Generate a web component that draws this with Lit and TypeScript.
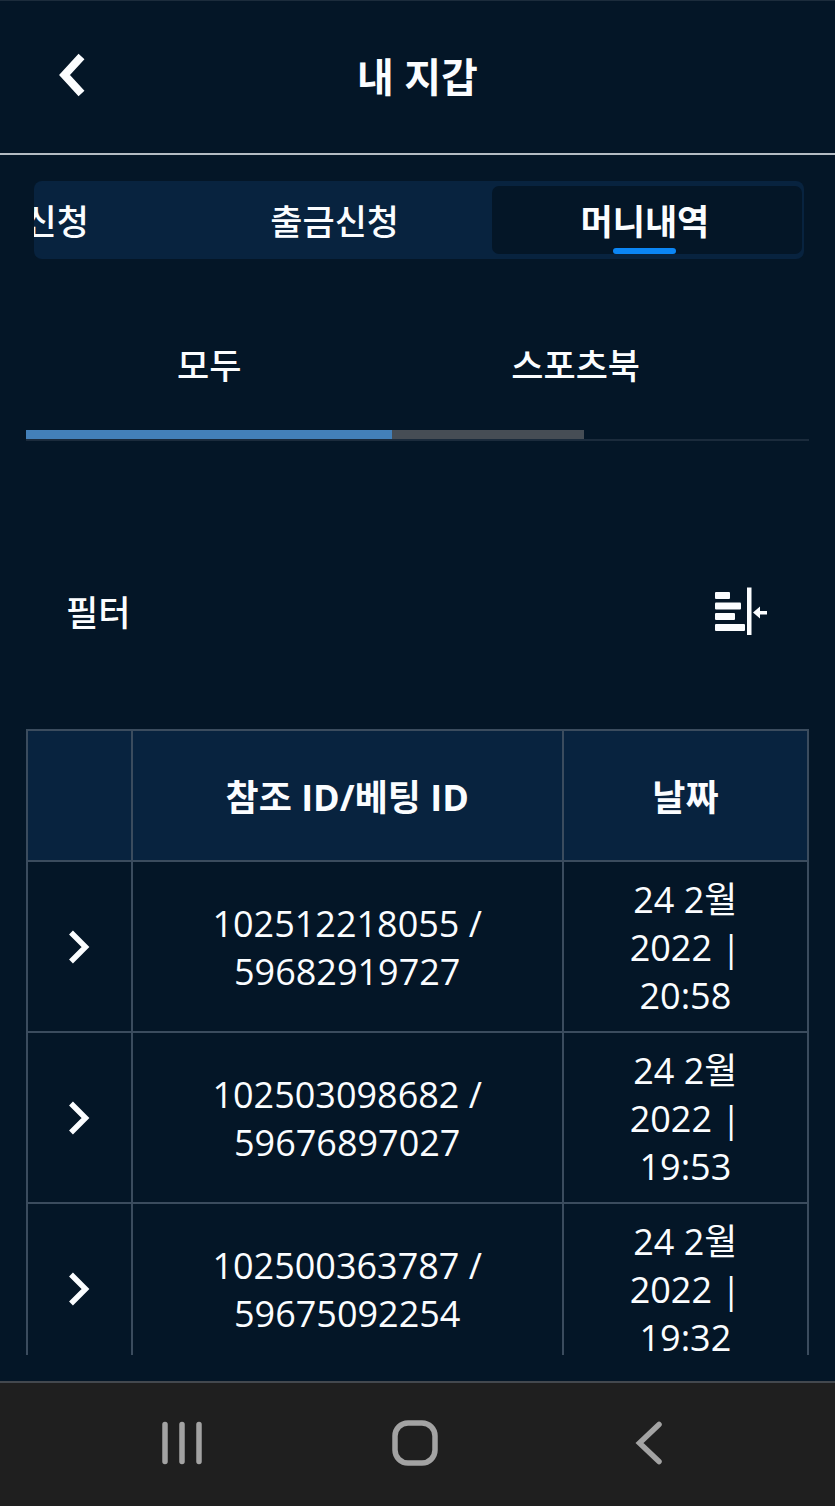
import { LitElement, html, css } from "lit";
import { customElement, state } from "lit/decorators.js";

interface Entry {
  reference: string;
  bet: string;
  day: string;
  year: string;
  time: string;
}

const ENTRIES: Entry[] = [
  { reference: "102512218055", bet: "59682919727", day: "24 2월", year: "2022", time: "20:58" },
  { reference: "102503098682", bet: "59676897027", day: "24 2월", year: "2022", time: "19:53" },
  { reference: "102500363787", bet: "59675092254", day: "24 2월", year: "2022", time: "19:32" },
];

@customElement("wallet-table")
export class WalletTable extends LitElement {
  static styles = css`
    :host {
      display: block;
    }
    .table {
      width: 100%;
      border-collapse: collapse;
      table-layout: fixed;
      font-size: 36px;
      line-height: 48px;
      text-align: center;
    }
    .col-toggle {
      width: 13.4%;
    }
    .col-date {
      width: 31.4%;
    }
    .head,
    .cell {
      border: 2px solid #3b4c5e;
      vertical-align: middle;
    }
    .head {
      height: 125px;
      padding: 4px 0 0;
      background: #08233f;
      font-weight: 700;
    }
    .cell {
      padding: 14px 8px 11px;
      font-weight: 400;
    }
    .line {
      display: block;
    }
    .toggle {
      display: inline-flex;
      padding: 4px 8px 10px;
      border: 0;
      background: none;
      color: inherit;
      vertical-align: middle;
    }
    .icon {
      display: block;
    }
  `;

  render() {
    return html`
      <table class="table">
        <colgroup>
          <col class="col-toggle" />
          <col />
          <col class="col-date" />
        </colgroup>
        <thead>
          <tr>
            <th class="head"></th>
            <th class="head" scope="col">참조 ID/베팅 ID</th>
            <th class="head" scope="col">날짜</th>
          </tr>
        </thead>
        <tbody>
          ${ENTRIES.map(
            (e) => html`<tr>
              <td class="cell">
                <button class="toggle" type="button" aria-labelledby=${"ref-" + e.reference}>
                  <svg class="icon" width="22" height="34" viewBox="0 0 22 34" fill="none" stroke="currentColor" stroke-width="5.500">
                    <path d="M3 2.500 L17.500 17 L3 31.500" />
                  </svg>
                </button>
              </td>
              <td class="cell" id=${"ref-" + e.reference}>
                <span class="line">${e.reference} /</span>
                <span class="line">${e.bet}</span>
              </td>
              <td class="cell">
                <span class="line">${e.day}</span>
                <span class="line">${e.year} |</span>
                <span class="line">${e.time}</span>
              </td>
            </tr>`
          )}
        </tbody>
      </table>
    `;
  }
}

@customElement("app-root")
export class AppRoot extends LitElement {
  static styles = css`
    :host {
      display: flex;
      flex-direction: column;
      box-sizing: border-box;
      height: 100vh;
      border-top: 1px solid #1c2c3c;
      background: #041627;
      color: #fbfdff;
      font-family: "Open Sans", "Noto Sans", "Noto Sans CJK KR", sans-serif;
      font-size: 35px;
      font-weight: 500;
      line-height: 48px;
    }
    button {
      margin: 0;
      border: 0;
      background: none;
      color: inherit;
      font: inherit;
    }
    svg {
      display: block;
    }
    .header {
      display: grid;
      grid-template-columns: 96px 1fr 96px;
      align-items: center;
      flex: none;
      height: 152px;
      border-bottom: 2px solid #b4bcc3;
    }
    .back {
      justify-self: end;
      padding: 0 10px 4px;
    }
    .title {
      margin: 0;
      font-size: 40px;
      font-weight: 700;
      line-height: 56px;
      text-align: center;
    }
    .tabs {
      display: flex;
      justify-content: flex-end;
      flex: none;
      box-sizing: border-box;
      height: 78px;
      margin: 26px 31px 0 34px;
      padding: 5px 2px;
      border-radius: 8px;
      overflow: hidden;
      background: #08233f;
    }
    .tab {
      display: flex;
      flex-direction: column;
      align-items: center;
      justify-content: flex-end;
      flex: 0 0 40.5%;
      padding: 0 4px 0 0;
      border-radius: 7px;
    }
    .tab::after {
      content: "";
      width: 63px;
      height: 6px;
      margin-top: 2px;
      border-radius: 3px;
    }
    .tab.active {
      background: #041627;
      font-weight: 700;
    }
    .tab.active::after {
      background: #0b86f5;
    }
    .kinds {
      flex: none;
      margin: 0 26px;
      border-bottom: 2px solid #1b2b3c;
    }
    .kind-row {
      display: grid;
      grid-template-columns: 46.8% 46.8%;
      height: 171px;
    }
    .kind {
      padding: 42px 0 0;
    }
    .track {
      width: 71.3%;
      height: 9px;
      background: #464d55;
    }
    .thumb {
      width: 65.6%;
      height: 9px;
      background: #4380b9;
    }
    .filter {
      display: flex;
      align-items: flex-start;
      justify-content: space-between;
      flex: none;
      padding: 146px 67px 90px 66px;
      line-height: 52px;
    }
    .filter-button {
      padding: 0;
    }
    .history {
      flex: 1;
      min-height: 0;
      margin: 0 26px 26px;
      overflow: hidden;
    }
    .system {
      display: grid;
      grid-template-columns: repeat(3, 28%);
      align-items: center;
      justify-content: center;
      flex: none;
      height: 123px;
      border-top: 2px solid #43484e;
      background: #1f1f1f;
      color: #a3a3a3;
    }
    .system-button {
      display: flex;
      justify-content: center;
      padding: 0 4px 4px 0;
    }
  `;

  @state() private tab = "머니내역";

  render() {
    return html`
      <header class="header">
        <button class="back" type="button">
          <svg width="27" height="44" viewBox="0 0 27 44" fill="none" stroke="currentColor" stroke-width="8">
            <path d="M22.500 3.500 L5.500 22 L22.500 40.500" />
          </svg>
        </button>
        <h1 class="title">내 지갑</h1>
      </header>

      <nav class="tabs">
        ${["입금신청", "출금신청", "머니내역"].map(
          (name) => html`<button
            class=${name === this.tab ? "tab active" : "tab"}
            type="button"
            @click=${() => (this.tab = name)}
          >${name}</button>`
        )}
      </nav>

      <div class="kinds">
        <div class="kind-row">
          <button class="kind" type="button">모두</button>
          <button class="kind" type="button">스포츠북</button>
        </div>
        <div class="track"><div class="thumb"></div></div>
      </div>

      <div class="filter">
        <span id="filter-label">필터</span>
        <button class="filter-button" type="button" aria-labelledby="filter-label">
          <svg width="54" height="48" viewBox="0 0 54 48" fill="currentColor">
            <rect x="1" y="5" width="15" height="7" rx="1" />
            <rect x="1" y="15.500" width="26" height="7" rx="1" />
            <rect x="1" y="26" width="20" height="7" rx="1" />
            <rect x="1" y="37" width="30" height="7" rx="1" />
            <rect x="33" y="0.500" width="4.500" height="47.500" />
            <path d="M39 25.500 L46 19.500 V24 H53 V27.500 H46 V31.500 Z" />
          </svg>
        </button>
      </div>

      <main class="history">
        <wallet-table></wallet-table>
      </main>

      <footer class="system">
        <button class="system-button" type="button">
          <svg width="42" height="44" viewBox="0 0 42 44" stroke="currentColor" stroke-width="5.500" stroke-linecap="round">
            <path d="M4 3.500 V40.500 M21 3.500 V40.500 M38 3.500 V40.500" />
          </svg>
        </button>
        <button class="system-button" type="button">
          <svg width="46" height="46" viewBox="0 0 46 46" fill="none" stroke="currentColor" stroke-width="5.500">
            <rect x="3" y="3" width="40" height="40" rx="13" />
          </svg>
        </button>
        <button class="system-button" type="button">
          <svg width="28" height="44" viewBox="0 0 28 44" fill="none" stroke="currentColor" stroke-width="5.500" stroke-linecap="round">
            <path d="M24 3.500 L4.500 22 L24 40.500" />
          </svg>
        </button>
      </footer>
    `;
  }
}
